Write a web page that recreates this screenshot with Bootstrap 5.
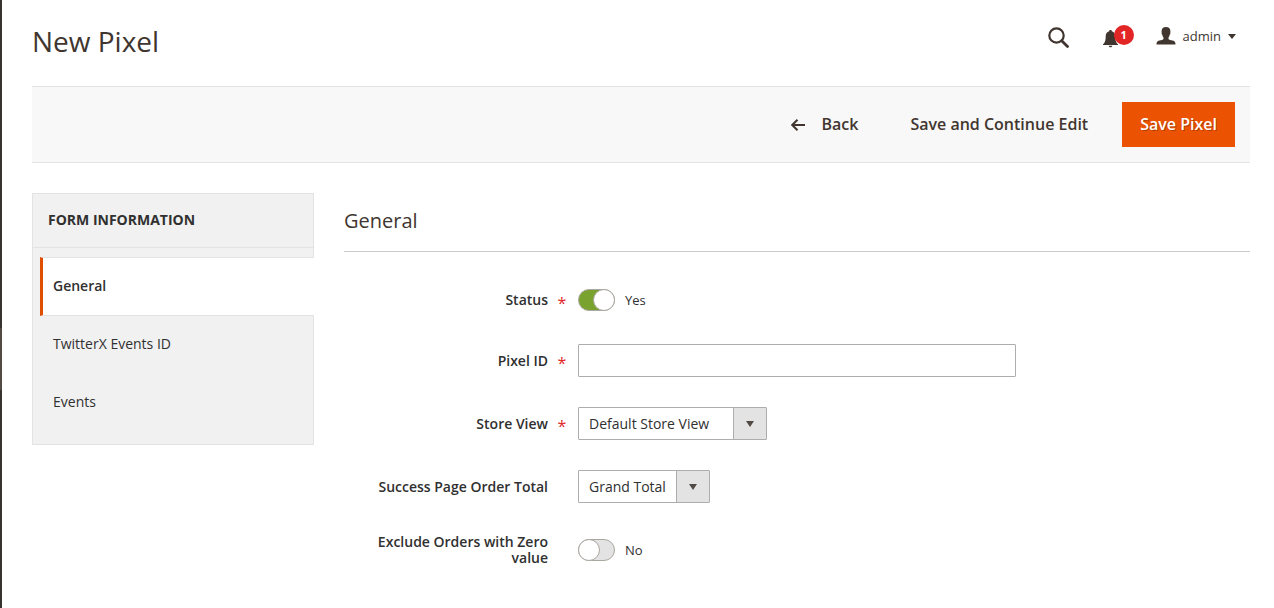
<!DOCTYPE html>
<html lang="en">
<head>
<meta charset="utf-8">
<meta name="viewport" content="width=device-width, initial-scale=1">
<title>New Pixel</title>
<link href="https://cdn.jsdelivr.net/npm/bootstrap@5.3.0/dist/css/bootstrap.min.css" rel="stylesheet">
<style>
  body { font-family: "Open Sans", "Noto Sans", sans-serif; font-size: 14px; line-height: 20px; color: #303030; background: #fff; }
  .menu-edge { width: 2px; background: #373330; }
  .menu-edge-current { height: 62px; margin-top: 328px; background: #514943; }
  .page-area { padding: 0 24px 30px 30px; min-width: 0; }
  .page-head { height: 86px; padding-bottom: 4px; }
  .page-heading { font-size: 28px; line-height: 36px; font-weight: 400; color: #41362f; }
  .head-tools { padding: 0 14px 7px 0; color: #41362f; }
  .tool-btn { border: 0; padding: 0; background: none; color: inherit; line-height: 20px; }
  .search-btn { margin-right: 34px; }
  .bell-btn { width: 31px; height: 20px; margin-right: 22px; text-align: left; }
  .bell-count { position: absolute; right: 0; top: -3px; width: 20px; height: 20px; border-radius: 50%; background: #e22626; color: #fff; font-size: 11px; font-weight: 700; line-height: 20px; text-align: center; }
  .user-btn { font-size: 13px; gap: 7px; padding-bottom: 3px; }
  .action-bar { background: #f8f8f8; border-top: 1px solid #e3e3e3; border-bottom: 1px solid #e3e3e3; padding: 15px; gap: 16px; }
  .act { border: 0; border-radius: 0; padding: 11px 18px; font-size: 16px; line-height: 23px; font-weight: 600; color: #41362f; background: none; }
  .act-main, .act-main:hover { background: #eb5202; color: #fff; text-shadow: 1px 1px 0 rgba(0,0,0,.25); }
  .work-area { display: grid; grid-template-columns: 282px minmax(0, 1fr); gap: 30px; padding-top: 30px; align-items: start; }
  .tabs-box { background: #f1f1f1; border: 1px solid #e3e3e3; padding-bottom: 12px; }
  .tabs-title { margin: 0; padding: 16px 15px 17px; font-size: 14px; line-height: 20px; font-weight: 700; border-bottom: 1px solid #e3e3e3; }
  .tabs-list { margin: 9px -1px 0 7px; }
  .tab-link { padding: 18px 10px 20px; border: 0 solid #e3e3e3; border-left: 3px solid transparent; color: #303030; line-height: 20px; text-decoration: none; }
  .tab-link.current { padding: 18px 10px 19px; border-width: 1px 0 1px 3px; border-left-color: #e04f00; background: #fff; font-weight: 600; }
  .section-title { margin: 0 0 34px; padding: 14px 0 17px; border-bottom: 1px solid #ccc; font-size: 20px; line-height: 27px; font-weight: 400; color: #41362f; }
  .field-list { row-gap: 30px; }
  .field-row { display: grid; grid-template-columns: 204px 30px minmax(0, 438px); align-items: center; min-height: 28px; }
  .field-name { padding: 1px 0; text-align: right; font-weight: 600; line-height: 16px; }
  .req { padding: 5px 2px 0 0; text-align: center; color: #e22626; font-size: 16px; line-height: 16px; font-weight: 400; }
  .control { height: 33px; border: 1px solid #adadad; border-radius: 1px; padding: 0 10px; font-size: 14px; line-height: 20px; color: #303030; }
  .pick { appearance: none; padding-right: 34px; background:
    url("data:image/svg+xml,%3Csvg xmlns='http://www.w3.org/2000/svg' width='8' height='6'%3E%3Cpath d='M0 0h8L4 6z' fill='%23514943'/%3E%3C/svg%3E") right 12px center / 8px 6px no-repeat,
    linear-gradient(to left, #e3e3e3 32px, #adadad 32px, #adadad 33px, #fff 33px); }
  .pick-store { width: 189px; }
  .pick-total { width: 132px; }
  .toggle { appearance: none; display: flex; flex: none; width: 37px; height: 22px; margin: 0; border: 1px solid #aaa6a0; border-radius: 11px; background: #e3e3e3; }
  .toggle::before { content: ""; width: 22px; height: 22px; margin: -1px; border: 1px solid #aaa6a0; border-radius: 50%; background: #fff; }
  .toggle:checked { background: #79a22e; justify-content: flex-end; }
  .toggle-text { padding-left: 10px; font-size: 13px; }
  @media (max-width: 900px) {
    .work-area { grid-template-columns: minmax(0, 1fr); }
    .action-bar { flex-wrap: wrap; }
  }
</style>
</head>
<body>
<div class="d-flex min-vh-100">
  <div class="menu-edge flex-shrink-0"><div class="menu-edge-current"></div></div>
  <div class="page-area flex-grow-1">
    <header class="page-head d-flex align-items-center justify-content-between">
      <h1 class="page-heading m-0">New Pixel</h1>
      <div class="head-tools d-flex align-items-center">
        <button class="tool-btn search-btn" type="button" aria-label="Search">
          <svg class="d-block" width="21" height="21" viewBox="0 0 21 21" fill="none" stroke="currentColor"><circle cx="8.5" cy="8.5" r="7.2" stroke-width="2.2"/><path d="M13.7 13.7l5.8 5.8" stroke-width="2.8" stroke-linecap="round"/></svg>
        </button>
        <button class="tool-btn bell-btn position-relative" type="button" aria-label="Notifications">
          <svg class="d-block" width="15" height="20" viewBox="0 0 15 20" fill="currentColor"><path d="M7.5 2c-.9 0-1.3.5-1.3 1.2C3.9 3.8 2.700 5.700 2.700 8.200c0 4.500-.8 6.200-2.700 8.100V17h15v-.7c-1.900-1.900-2.700-3.600-2.700-8.100 0-2.500-1.200-4.400-3.500-5C8.800 2.500 8.400 2 7.500 2zM5.700 17.800c.2 1 .9 1.500 1.800 1.500s1.600-.5 1.800-1.500z"/></svg>
          <span class="bell-count">1</span>
        </button>
        <button class="tool-btn user-btn d-flex align-items-center" type="button">
          <svg width="20" height="18" viewBox="0 0 20 18" fill="currentColor"><path d="M10 0C7.200 0 5.600 1.600 5.600 4.200c0 .5.1.9.2 1.300-.4.300-.3 1.500.4 1.900.3 1.500.8 2.400 1.300 3v1.500c-.4.800-2.200 1.100-4.100 1.600C1 14.200.5 15.200.5 17.500h19c0-2.300-.5-3.300-2.900-4-1.900-.5-3.700-.8-4.100-1.600v-1.500c.5-.6 1-1.500 1.300-3 .7-.4.8-1.600.4-1.900.1-.4.200-.8.200-1.300C14.400 1.600 12.800 0 10 0z"/></svg>
          <span>admin</span>
          <svg width="8" height="5" viewBox="0 0 8 5" fill="currentColor"><path d="M0 0h8L4 5z"/></svg>
        </button>
      </div>
    </header>

    <div class="action-bar d-flex justify-content-end">
      <button class="btn act d-flex align-items-center" type="button">
        <svg class="me-3" width="14" height="12" viewBox="0 0 14 12" fill="none" stroke="currentColor" stroke-width="2"><path d="M6.500.7L1.200 6l5.300 5.300M1.500 6H14"/></svg>
        Back
      </button>
      <button class="btn act" type="button">Save and Continue Edit</button>
      <button class="btn act act-main" type="submit" form="pixel-form">Save Pixel</button>
    </div>

    <div class="work-area">
      <nav class="tabs-box" aria-labelledby="tabs-title">
        <h2 class="tabs-title text-uppercase" id="tabs-title">Form Information</h2>
        <div class="tabs-list d-flex flex-column">
          <a class="tab-link current" href="#general" aria-current="page">General</a>
          <a class="tab-link" href="#events-id">TwitterX Events ID</a>
          <a class="tab-link" href="#events">Events</a>
        </div>
      </nav>

      <form id="pixel-form">
        <h2 class="section-title" id="general">General</h2>
        <div class="field-list d-grid">
          <div class="field-row">
            <label class="field-name" for="status">Status</label>
            <span class="req">*</span>
            <div class="d-flex align-items-center">
              <input class="toggle" type="checkbox" role="switch" id="status" checked>
              <label class="toggle-text" for="status">Yes</label>
            </div>
          </div>
          <div class="field-row">
            <label class="field-name" for="pixel-id">Pixel ID</label>
            <span class="req">*</span>
            <input class="control w-100" type="text" id="pixel-id">
          </div>
          <div class="field-row">
            <label class="field-name" for="store-view">Store View</label>
            <span class="req">*</span>
            <select class="control pick pick-store" id="store-view"><option>Default Store View</option></select>
          </div>
          <div class="field-row">
            <label class="field-name" for="order-total">Success Page Order Total</label>
            <span></span>
            <select class="control pick pick-total" id="order-total"><option>Grand Total</option></select>
          </div>
          <div class="field-row">
            <label class="field-name" for="exclude-zero">Exclude Orders with Zero value</label>
            <span></span>
            <div class="d-flex align-items-center">
              <input class="toggle" type="checkbox" role="switch" id="exclude-zero">
              <label class="toggle-text" for="exclude-zero">No</label>
            </div>
          </div>
        </div>
      </form>
    </div>
  </div>
</div>
<script src="https://cdn.jsdelivr.net/npm/bootstrap@5.3.0/dist/js/bootstrap.bundle.min.js"></script>
</body>
</html>
